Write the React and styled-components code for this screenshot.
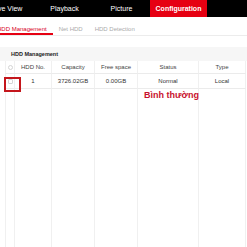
import React from "react";
import styled, { createGlobalStyle } from "styled-components";

const Global = createGlobalStyle`
  html, body { margin: 0; padding: 0; background: #fff; overflow: hidden; }
  body { font-family: "Liberation Sans", Arial, sans-serif; }
`;

const Page = styled.div`
  position: relative;
  width: 247px;
  height: 247px;
  overflow: hidden;
  background: #fff;
`;

const TopBar = styled.div`
  height: 17px;
  background: #000;
  display: flex;
  align-items: stretch;
  padding-left: 0;
`;

const NavList = styled.div`
  display: flex;
  margin-left: -21px;
`;

const NavItem = styled.div`
  width: 57px;
  display: flex;
  align-items: center;
  justify-content: center;
  font-size: 7px;
  color: #fff;
  font-weight: ${(p) => (p.$active ? 700 : 400)};
  background: ${(p) => (p.$active ? "#e60012" : "transparent")};
  white-space: nowrap;
`;

const SubTabs = styled.div`
  height: 18px;
  display: flex;
  border-bottom: 1px solid #ececec;
  box-sizing: content-box;
`;

const TabList = styled.div`
  display: flex;
  margin-left: -9px;
`;

const Tab = styled.div`
  height: 18px;
  box-sizing: border-box;
  padding: 8px 6px 0;
  line-height: 8px;
  font-size: 6px;
  white-space: nowrap;
  color: ${(p) => (p.$active ? "#d7001d" : "#aaa")};
  border-bottom: 2px solid ${(p) => (p.$active ? "#e60012" : "transparent")};
`;

const Section = styled.div`
  margin-top: 11px;
`;

const SectionTitle = styled.div`
  height: 14px;
  background: #f6f6f6;
  display: flex;
  align-items: center;
  padding-left: 11px;
  font-size: 5.5px;
  font-weight: 700;
  color: #222;
`;

const Table = styled.div`
  margin-left: 5px;
  display: grid;
  grid-template-columns: 10px 37px 43px 43px 61px 47px;
  grid-template-rows: 13px 15px 170px;
`;

const Cell = styled.div`
  display: flex;
  align-items: center;
  justify-content: center;
  font-size: 6px;
  color: ${(p) => (p.$head ? "#444" : "#333")};
  white-space: nowrap;
  border-right: 1px solid #f0f0f0;
  border-left: ${(p) => (p.$first ? "1px solid #f0f0f0" : "none")};
  border-bottom: ${(p) => (p.$line ? "1px solid #ebebeb" : "none")};
  box-sizing: border-box;
`;

const Check = styled.span`
  width: 5px;
  height: 5px;
  border: 1px solid #d4d4d4;
  border-radius: ${(p) => (p.$round ? "50%" : "1px")};
  box-sizing: border-box;
  background: #fff;
`;

const Highlight = styled.div`
  position: absolute;
  left: 4px;
  top: 77px;
  width: 17px;
  height: 15px;
  border: 2px solid #c4161c;
  box-sizing: border-box;
`;

const Note = styled.div`
  position: absolute;
  left: 144px;
  top: 90px;
  font-size: 9px;
  font-weight: 700;
  color: #c8102e;
  white-space: nowrap;
`;

const headers = ["HDD No.", "Capacity", "Free space", "Status", "Type"];
const row = ["1", "3726.02GB", "0.00GB", "Normal", "Local"];

export default function App() {
  return (
    <Page>
      <Global />
      <TopBar>
        <NavList>
          <NavItem>Live View</NavItem>
          <NavItem>Playback</NavItem>
          <NavItem>Picture</NavItem>
          <NavItem $active>Configuration</NavItem>
        </NavList>
      </TopBar>
      <SubTabs>
        <TabList>
          <Tab $active>HDD Management</Tab>
          <Tab>Net HDD</Tab>
          <Tab>HDD Detection</Tab>
        </TabList>
      </SubTabs>
      <Section>
        <SectionTitle>HDD Management</SectionTitle>
        <Table>
          <Cell $head $first $line>
            <Check $round />
          </Cell>
          {headers.map((h) => (
            <Cell key={h} $head $line>
              {h}
            </Cell>
          ))}
          <Cell $first $line>
            <Check />
          </Cell>
          {row.map((v, i) => (
            <Cell key={i} $line>
              {v}
            </Cell>
          ))}
          <Cell $first />
          {row.map((v, i) => (
            <Cell key={"e" + i} />
          ))}
        </Table>
      </Section>
      <Highlight />
      <Note>Bình thường</Note>
    </Page>
  );
}
